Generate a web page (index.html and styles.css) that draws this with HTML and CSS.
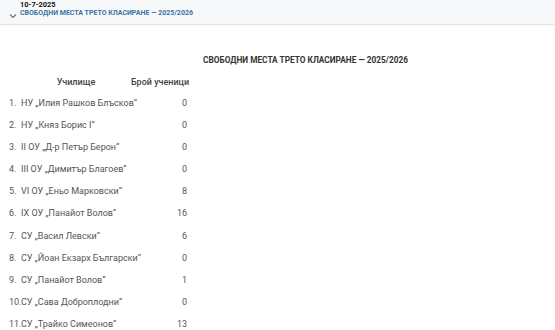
FILE: index.html
```html
<!DOCTYPE html>
<html lang="bg">
<head>
<meta charset="utf-8">
<link rel="stylesheet" href="styles.css">
</head>
<body>
<header class="bar">
  <svg class="chev" width="8" height="6" viewBox="0 0 8 6"><path d="M1 1.5 L4 4.5 L7 1.5" fill="none" stroke="#6b7280" stroke-width="1.1"/></svg>
  <div class="bar-text">
    <div class="date">10-7-2025</div>
    <div class="sub">СВОБОДНИ МЕСТА ТРЕТО КЛАСИРАНЕ — 2025/2026</div>
  </div>
</header>
<main class="content">
  <h1 class="title">СВОБОДНИ МЕСТА ТРЕТО КЛАСИРАНЕ — 2025/2026</h1>
  <div class="table">
    <div class="th th-school">Училище</div><div class="th th-count">Брой ученици</div>
    <div class="td school"><span class="n">1.</span>НУ „Илия Рашков Блъсков“</div><div class="td count">0</div>
    <div class="td school"><span class="n">2.</span>НУ „Княз Борис I“</div><div class="td count">0</div>
    <div class="td school"><span class="n">3.</span>II ОУ „Д-р Петър Берон“</div><div class="td count">0</div>
    <div class="td school"><span class="n">4.</span>III ОУ „Димитър Благоев“</div><div class="td count">0</div>
    <div class="td school"><span class="n">5.</span>VI ОУ „Еньо Марковски“</div><div class="td count">8</div>
    <div class="td school"><span class="n">6.</span>IX ОУ „Панайот Волов“</div><div class="td count">16</div>
    <div class="td school"><span class="n">7.</span>СУ „Васил Левски“</div><div class="td count">6</div>
    <div class="td school"><span class="n">8.</span>СУ „Йоан Екзарх Български“</div><div class="td count">0</div>
    <div class="td school"><span class="n">9.</span>СУ „Панайот Волов“</div><div class="td count">1</div>
    <div class="td school"><span class="n">10.</span>СУ „Сава Доброплодни“</div><div class="td count">0</div>
    <div class="td school"><span class="n">11.</span>СУ „Трайко Симеонов“</div><div class="td count">13</div>
  </div>
</main>
</body>
</html>
```
FILE: styles.css
```css
* { box-sizing: border-box; }
html, body { margin: 0; padding: 0; background: #fff; }
body { font-family: Roboto, "Noto Sans", sans-serif; color: #555; width: 555px; overflow: hidden; }
.bar { height: 25px; background: #f7f8fa; border-bottom: 1px solid #e3e6ea; box-shadow: 0 1px 3px rgba(0,0,0,0.04); display: flex; align-items: flex-start; padding-left: 9px; }
.chev { margin-top: 13px; margin-right: 3px; flex: none; }
.bar-text { padding-top: 1px; }
.date { font-size: 7.4px; font-weight: 700; color: #111; line-height: 8px; }
.sub { font-size: 7px; font-weight: 700; color: #3b73a8; line-height: 8px; }
.content { padding: 29px 0 0 6px; }
.title { margin: 0 0 7px 0; padding-left: 197px; font-size: 8.3px; font-weight: 700; color: #333; line-height: 12px; }
.table { display: grid; grid-template-columns: 125px 58px; font-size: 9px; }
.th { font-weight: 500; color: #444; height: 19px; line-height: 18px; white-space: nowrap; }
.th-school { text-align: center; padding-left: 15px; }
.th-count { text-align: right; padding-right: 2px; }
.td { height: 22.1px; line-height: 22px; white-space: nowrap; }
.school { padding-left: 3px; }
.n { display: inline-block; width: 12px; }
.count { text-align: right; padding-right: 2px; }
```
